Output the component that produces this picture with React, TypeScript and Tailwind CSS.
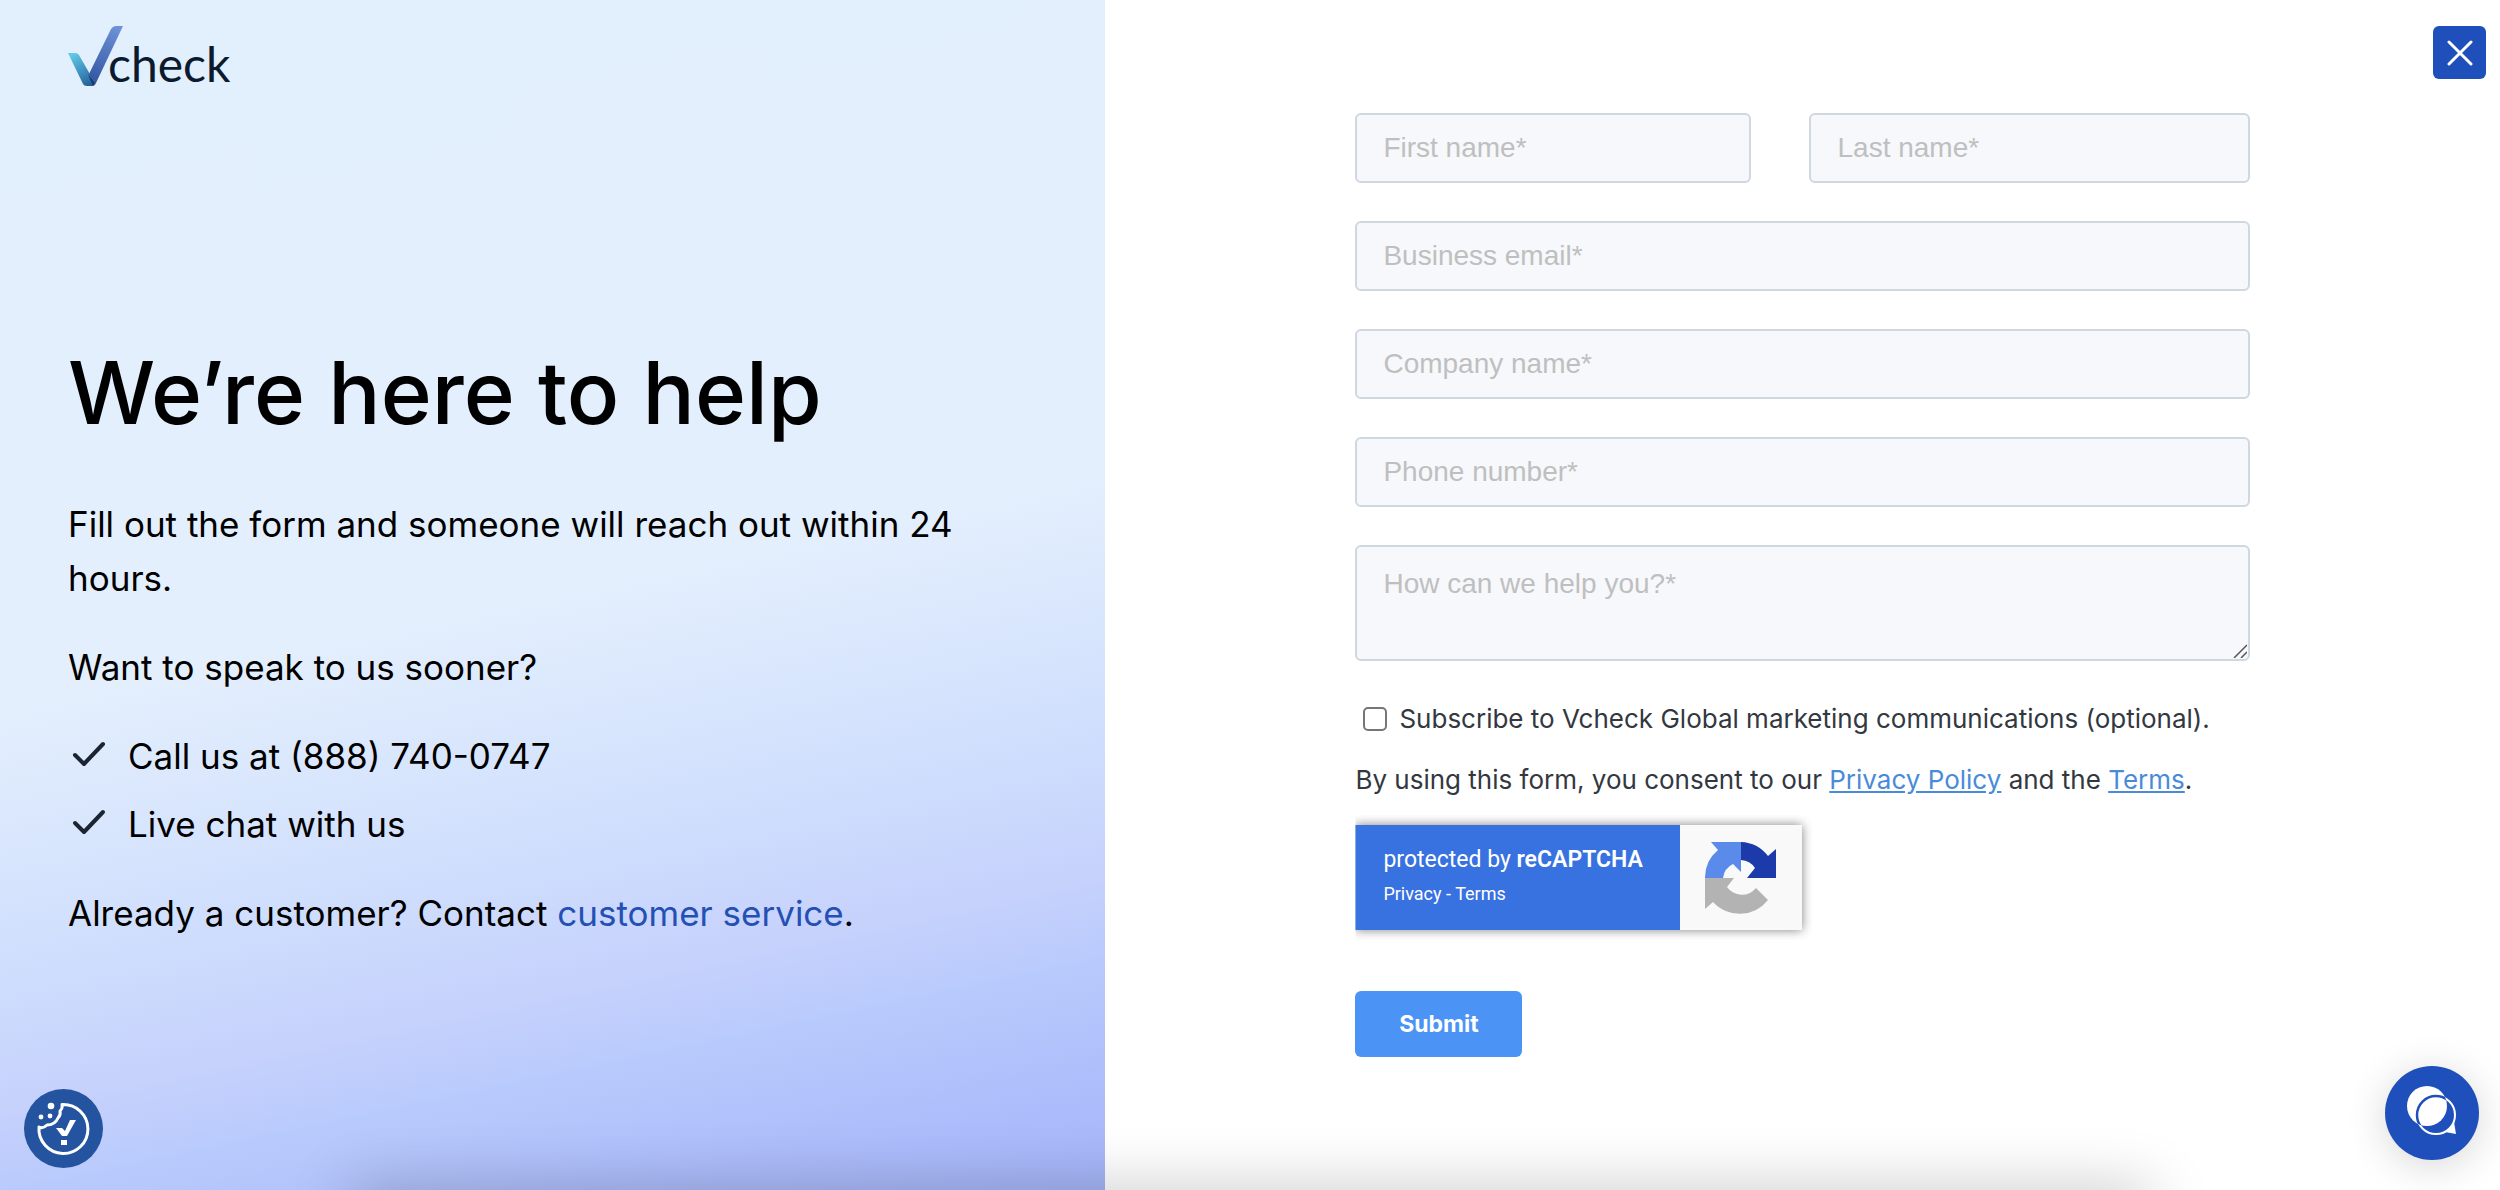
import type { ReactNode } from "react";

const fieldClass =
  "w-full rounded-md border-2 border-[#cfd7e0] bg-[#f6f8fb] px-[26px] font-['Liberation_Sans',sans-serif] text-[28px] text-[#33475b] placeholder:text-[#bfbfbf] outline-none focus:border-[#4b93f4]";

const Logo = () => (
  <a href="#" aria-label="Vcheck" className="flex w-fit items-end">
    <svg width="56" height="60" viewBox="0 0 56 60" fill="none" aria-hidden="true">
      <defs>
        <linearGradient id="logo-left" x1="4" y1="28" x2="22" y2="60" gradientUnits="userSpaceOnUse">
          <stop stopColor="#62cbe3" />
          <stop offset="0.55" stopColor="#3f8fc0" />
          <stop offset="1" stopColor="#235f96" />
        </linearGradient>
        <linearGradient id="logo-right" x1="48" y1="0" x2="22" y2="58" gradientUnits="userSpaceOnUse">
          <stop stopColor="#6d92d8" />
          <stop offset="1" stopColor="#31539f" />
        </linearGradient>
      </defs>
      <path d="M0 27H7Q10 27 11 29L27 57L25 60H19Q16 60 15 58Z" fill="url(#logo-left)" />
      <path d="M55 0H48Q45 0 43 3L21 48L27 57L25 60Q27 60 28 57Z" fill="url(#logo-right)" />
      <path d="M20 48L27 57L25 60Z" fill="#173a6e" />
    </svg>
    <span className="-ml-4 font-['Lato',sans-serif] text-[48px] leading-[44px] text-[#0b1a2e]">check</span>
  </a>
);

const CheckItem = ({ children }: { children: ReactNode }) => (
  <li className="flex items-center gap-5">
    <svg width="40" height="40" viewBox="0 0 40 40" fill="none" className="shrink-0" aria-hidden="true">
      <path d="M7 19L16 28L35 8" stroke="#1b2430" strokeWidth="4" strokeLinecap="round" strokeLinejoin="round" />
    </svg>
    <span>{children}</span>
  </li>
);

const RecaptchaLogo = () => (
  <svg width="72" height="74" viewBox="0 0 72 74" aria-hidden="true">
    <path d="M36 1A36 36 0 0 1 63 15L71 8V37H42L50 27A18 18 0 0 0 36 19Z" fill="#1c3aa9" />
    <path d="M36 1V31L28 23A18 18 0 0 0 18 37H0A36 36 0 0 1 13 9L6 1Z" fill="#5a8bea" />
    <path d="M0 37H29L22 46A18 18 0 0 0 51 47L63 59A36 36 0 0 1 8 61L0 68Z" fill="#b3b3b3" />
  </svg>
);

const Recaptcha = () => (
  <div className="mt-[27px] flex h-[105px] w-[447px] shadow-[0_0_10px_rgba(0,0,0,0.5)] font-['Roboto',sans-serif] text-white [clip-path:inset(-10px_-10px_-10px_0px)]">
    <div className="flex flex-1 flex-col bg-[#3871e0] pt-[21px] pl-7">
      <div className="text-[23px] leading-7">
        protected by <strong className="font-semibold">reCAPTCHA</strong>
      </div>
      <div className="pt-2 text-[18px] leading-6">
        <a href="#">Privacy</a> - <a href="#">Terms</a>
      </div>
    </div>
    <div className="flex w-[122px] items-center justify-center bg-[#f9f9f9]">
      <RecaptchaLogo />
    </div>
  </div>
);

const ContactForm = () => (
  <form className="mx-auto flex w-[64.1%] flex-col pt-[113px] font-['Inter',sans-serif] text-[#33383f]">
    <div className="grid grid-cols-[396fr_440fr] gap-x-[58px]">
      <input aria-label="First name" placeholder="First name*" className={`${fieldClass} h-[70px]`} />
      <input aria-label="Last name" placeholder="Last name*" className={`${fieldClass} h-[70px]`} />
    </div>
    <div className="mt-[38px] flex flex-col gap-[38px]">
      <input type="email" aria-label="Business email" placeholder="Business email*" className={`${fieldClass} h-[70px]`} />
      <input aria-label="Company name" placeholder="Company name*" className={`${fieldClass} h-[70px]`} />
      <input type="tel" aria-label="Phone number" placeholder="Phone number*" className={`${fieldClass} h-[70px]`} />
      <div className="relative flex">
        <textarea aria-label="How can we help you?" placeholder="How can we help you?*" className={`${fieldClass} h-[116px] resize-none pt-4`} />
        <svg width="14" height="14" viewBox="0 0 14 14" stroke="#555" strokeWidth="1.5" className="pointer-events-none absolute right-[3px] bottom-[3px]" aria-hidden="true">
          <path d="M1 14L14 1M8 14L14 8" />
        </svg>
      </div>
    </div>
    <label className="mt-10 flex items-center gap-3 pl-2 text-[26px] leading-9">
      <input
        type="checkbox"
        className="size-6 shrink-0 appearance-none rounded-[5px] border-2 border-[#767676] bg-white checked:bg-[#1f4fbc]"
      />
      <span className="whitespace-nowrap">Subscribe to Vcheck Global marketing communications (optional).</span>
    </label>
    <p className="mt-[25px] text-[26px] leading-9 whitespace-nowrap">
      By using this form, you consent to our{" "}
      <a href="#" className="text-[#4a8bd9] underline">Privacy Policy</a> and the{" "}
      <a href="#" className="text-[#4a8bd9] underline">Terms</a>.
    </p>
    <Recaptcha />
    <button type="submit" className="mt-[61px] h-[66px] w-[167px] rounded-md bg-[#4b94f5] text-[23px] font-bold text-white">
      Submit
    </button>
  </form>
);

const CookieButton = () => (
  <button type="button" aria-label="Cookie settings" className="absolute bottom-[22px] left-6 size-[79px] rounded-full bg-[#2453a0]">
    <svg viewBox="0 0 79 79" fill="none" aria-hidden="true">
      <path
        d="M38 15.500A24.500 24.500 0 1 1 15 38Q19 40 23 36Q31 36 34 29Q37 26 36 22Q39 19 38 15.500Z"
        stroke="#fff"
        strokeWidth="3"
        strokeLinejoin="round"
      />
      <circle cx="27" cy="17" r="3.300" fill="#fff" />
      <circle cx="17" cy="28" r="2.400" fill="#fff" />
      <circle cx="26" cy="27" r="2.400" fill="#fff" />
      <path d="M32 39H38L41 42L46 31H52L43 47H38Z" fill="#fff" />
      <path d="M37 51H43V56H37Z" fill="#fff" />
    </svg>
  </button>
);

const ChatButton = () => (
  <button
    type="button"
    aria-label="Open chat"
    className="absolute right-[21px] bottom-[30px] size-[94px] rounded-full bg-[#1f4fbb] shadow-[0_6px_40px_rgba(0,0,0,0.16)]"
  >
    <svg viewBox="0 0 94 94" fill="none" aria-hidden="true">
      <clipPath id="chat-back">
        <circle cx="42" cy="40" r="20" />
      </clipPath>
      <circle cx="42" cy="40" r="20" fill="#fff" />
      <circle cx="51" cy="49" r="19" stroke="#fff" strokeWidth="2" />
      <circle cx="51" cy="49" r="19" stroke="#1f4fbb" strokeWidth="2.500" clipPath="url(#chat-back)" />
      <path d="M60 66Q67 63 69 56L71 68Z" fill="#fff" />
    </svg>
  </button>
);

const App = () => {
  return (
    <main className="relative flex min-h-screen overflow-hidden bg-white">
      <section className="w-[44.2%] bg-[linear-gradient(168deg,#e2effd_0%,#e3effd_50%,#cfdefd_68%,#c6d1fc_78%,#b8cafc_84%,#adbcfb_93%,#a5b5f8_100%)] px-[68px] pt-[26px] pb-20 font-['Inter',sans-serif] text-[35px] leading-[54px] text-black">
        <Logo />
        <h1 className="mt-[254px] text-[87px] leading-[106px] font-medium">We’re here to help</h1>
        <div className="mt-[51px] flex flex-col gap-[35px]">
          <p>Fill out the form and someone will reach out within 24 hours.</p>
          <p>Want to speak to us sooner?</p>
          <ul className="flex flex-col gap-[14px]">
            <CheckItem>Call us at (888) 740-0747</CheckItem>
            <CheckItem>Live chat with us</CheckItem>
          </ul>
          <p>
            Already a customer? Contact <a href="#" className="text-[#2450b4]">customer service</a>.
          </p>
        </div>
      </section>

      <section className="flex-1 pb-20">
        <ContactForm />
      </section>

      <button
        type="button"
        aria-label="Close"
        className="absolute top-[26px] right-[14px] flex size-[53px] items-center justify-center rounded-md bg-[#1f4fbb]"
      >
        <svg width="26" height="26" viewBox="0 0 26 26" stroke="#fff" strokeWidth="3" strokeLinecap="round" aria-hidden="true">
          <path d="M2 2L24 24M24 2L2 24" />
        </svg>
      </button>
      <CookieButton />
      <ChatButton />
      <div className="pointer-events-none absolute inset-x-[14%] -bottom-10 h-10 shadow-[0_0_60px_rgba(0,0,0,0.25)]" />
    </main>
  );
};

export default App;
